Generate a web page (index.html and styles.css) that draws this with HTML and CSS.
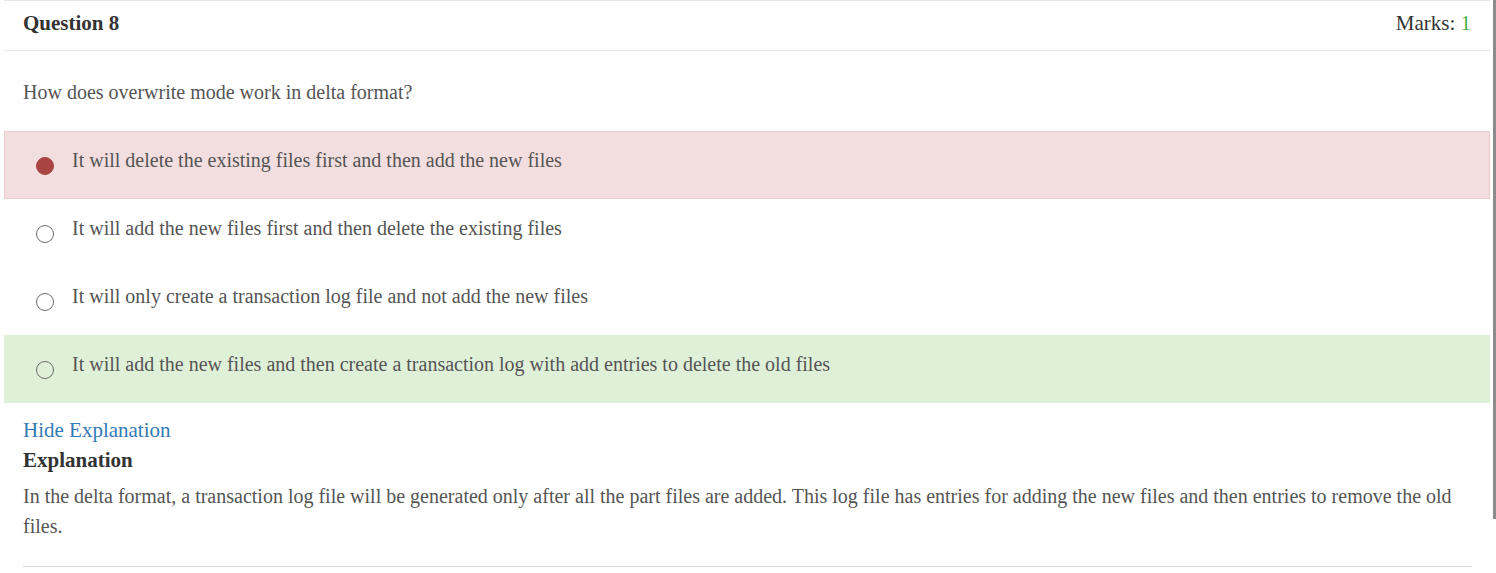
FILE: index.html
```html
<!DOCTYPE html>
<html>
<head>
<meta charset="utf-8">
<link rel="stylesheet" href="styles.css">
</head>
<body>
<div class="panel">
  <div class="q-header">
    <span class="q-title">Question 8</span>
    <span class="q-marks">Marks: <span class="mark-num">1</span></span>
  </div>
  <div class="q-text">How does overwrite mode work in delta format?</div>
  <div class="options">
    <div class="option wrong">
      <span class="radio filled"></span>
      <span class="opt-text">It will delete the existing files first and then add the new files</span>
    </div>
    <div class="option">
      <span class="radio"></span>
      <span class="opt-text">It will add the new files first and then delete the existing files</span>
    </div>
    <div class="option">
      <span class="radio"></span>
      <span class="opt-text">It will only create a transaction log file and not add the new files</span>
    </div>
    <div class="option right">
      <span class="radio"></span>
      <span class="opt-text">It will add the new files and then create a transaction log with add entries to delete the old files</span>
    </div>
  </div>
  <div class="explain">
    <a class="toggle" href="#">Hide Explanation</a>
    <div class="explain-title">Explanation</div>
    <p class="explain-text">In the delta format, a transaction log file will be generated only after all the part files are added. This log file has entries for adding the new files and then entries to remove the old files.</p>
    <div class="rule"></div>
  </div>
</div>
<div class="scrollthumb"></div>
</body>
</html>
```

FILE: styles.css
```css
html, body {
  margin: 0;
  padding: 0;
  background: #fff;
  font-family: "Liberation Serif", "Times New Roman", serif;
  overflow: hidden;
}
.panel {
  margin: 0 6px 0 4px;
}
.q-header {
  display: flex;
  justify-content: space-between;
  align-items: flex-start;
  box-sizing: content-box;
  padding: 8px 19px 0 19px;
  height: 41px;
  border-top: 1px solid #e4e6ea;
  border-bottom: 1px solid #e4e6ea;
  font-size: 21px;
  line-height: 28px;
  color: #333;
}
.q-title {
  font-weight: bold;
}
.q-marks {
  color: #333;
}
.mark-num {
  color: #4cae4c;
}
.q-text {
  padding: 27px 19px 25px 19px;
  font-size: 20px;
  line-height: 28px;
  color: #555;
}
.option {
  display: flex;
  align-items: flex-start;
  height: 68px;
  box-sizing: border-box;
  padding: 15px 0 0 32px;
  font-size: 20px;
  line-height: 28px;
  color: #555;
}
.option.wrong {
  background: #f2dede;
  border: 1px solid #ebccd1;
  padding-top: 14px;
  padding-left: 31px;
}
.option.right {
  background: #dff0d8;
}
.radio {
  width: 18px;
  height: 18px;
  box-sizing: border-box;
  border: 1.5px solid #6b6b6b;
  border-radius: 50%;
  margin-top: 11px;
  flex: none;
}
.radio.filled {
  background: #a94442;
  border-color: #a94442;
}
.opt-text {
  margin-left: 18px;
}
.explain {
  padding: 13px 18px 0 19px;
}
.toggle {
  display: block;
  font-size: 21px;
  line-height: 28px;
  color: #337ab7;
  text-decoration: none;
}
.explain-title {
  font-size: 21px;
  font-weight: bold;
  line-height: 32px;
  color: #333;
}
.explain-text {
  margin: 5px 0 0 0;
  font-size: 20px;
  line-height: 30px;
  color: #555;
}
.rule {
  margin-top: 25px;
  border-top: 1px solid #dcdcdc;
}
.scrollthumb {
  position: fixed;
  top: 0;
  right: 0;
  width: 3px;
  height: 519px;
  background: #8c8c8c;
}
```
